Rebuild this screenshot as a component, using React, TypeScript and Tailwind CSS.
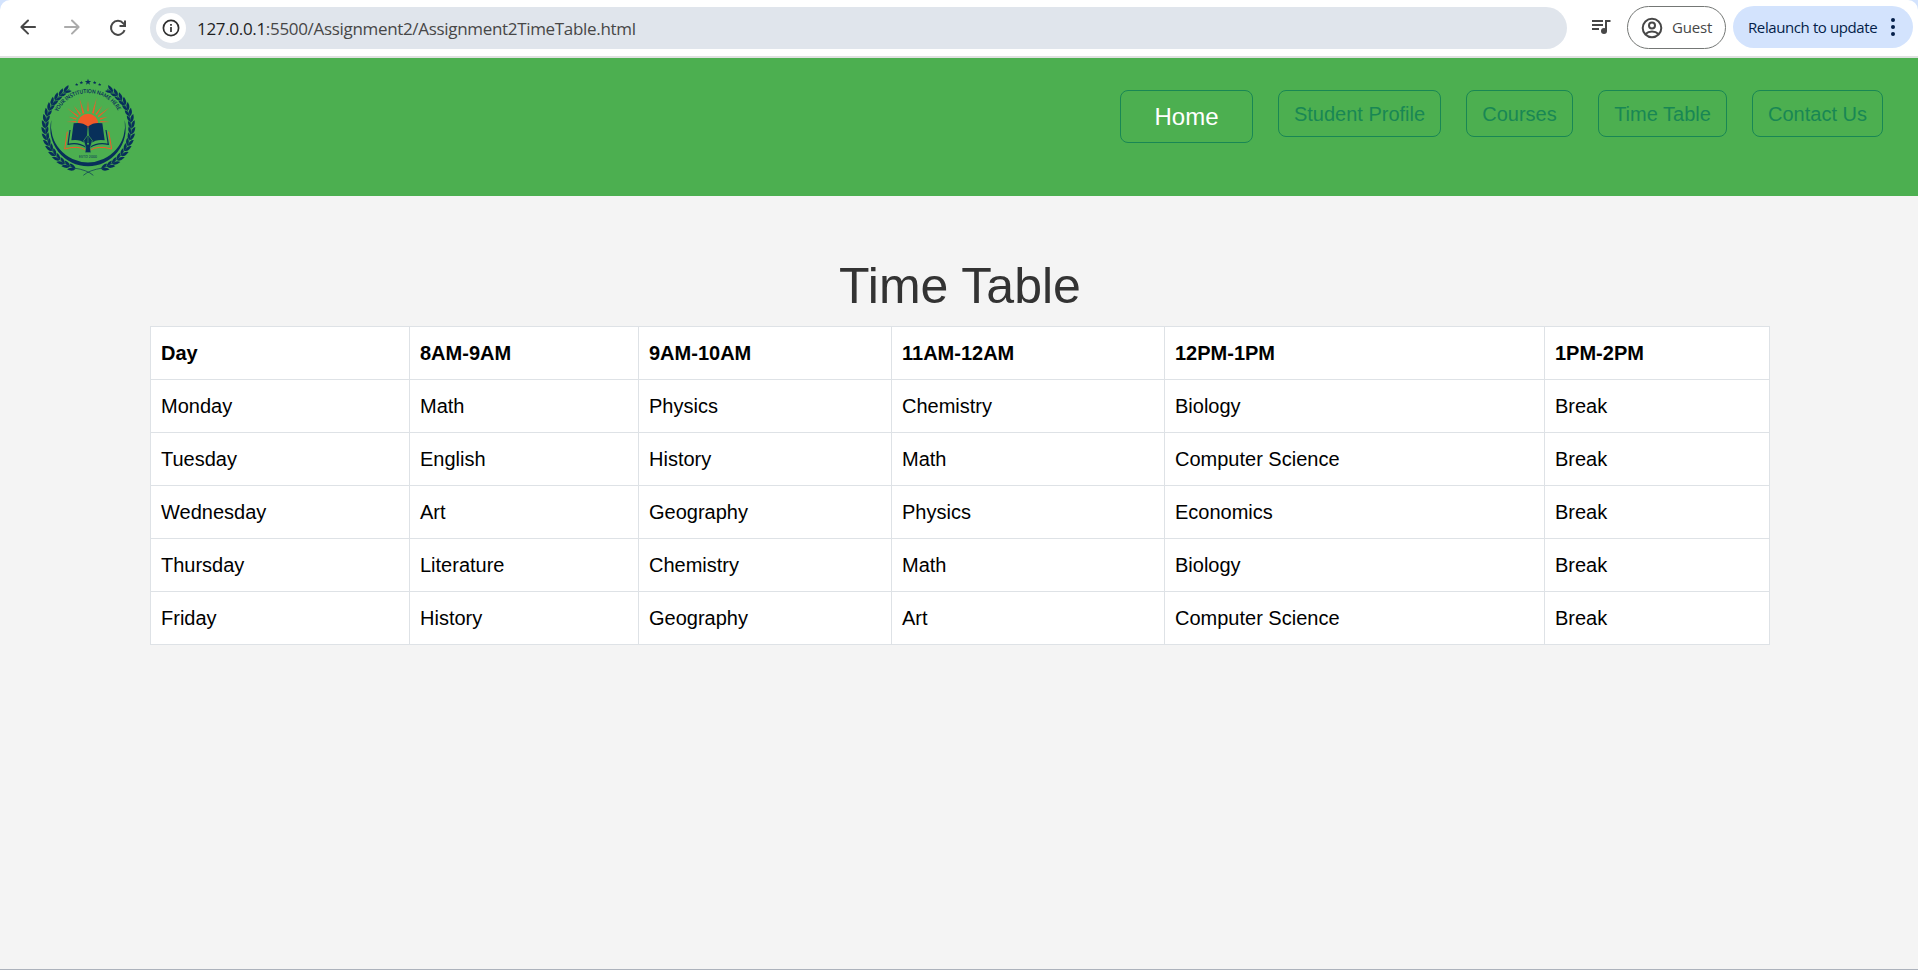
import React from "react";

const navItems = [
  { label: "Student Profile", width: "w-[163px]" },
  { label: "Courses", width: "w-[107px]" },
  { label: "Time Table", width: "w-[129px]" },
  { label: "Contact Us", width: "w-[131px]" },
];

const columns = [
  { label: "Day", width: "w-[259px]" },
  { label: "8AM-9AM", width: "w-[229px]" },
  { label: "9AM-10AM", width: "w-[253px]" },
  { label: "11AM-12AM", width: "w-[273px]" },
  { label: "12PM-1PM", width: "w-[380px]" },
  { label: "1PM-2PM", width: "w-[225px]" },
];

const rows = [
  ["Monday", "Math", "Physics", "Chemistry", "Biology", "Break"],
  ["Tuesday", "English", "History", "Math", "Computer Science", "Break"],
  ["Wednesday", "Art", "Geography", "Physics", "Economics", "Break"],
  ["Thursday", "Literature", "Chemistry", "Math", "Biology", "Break"],
  ["Friday", "History", "Geography", "Art", "Computer Science", "Break"],
];

const leafAngles = [32, 40, 48, 56, 64, 72, 80, 88, 96, 104, 112, 120, 128, 136, 144, 152, 160];

function Wreath() {
  return (
    <g>
      <path d="M119 57 A129 129 0 0 0 132 294 Q172 300 190 316" fill="none" stroke="#08305a" strokeWidth="2" />
      {leafAngles.map((a) => (
        <g key={a} transform={`rotate(${-a} 175 173)`} fill="#08305a">
          <path d="M169 44 Q172 32 192 33 Q188 45 169 44Z" />
          <path d="M169 44 Q176 56 191 53 Q186 43 169 44Z" />
        </g>
      ))}
    </g>
  );
}

function Logo() {
  const star = "M0 -9 L2.4 -3 L9 -2.8 L3.8 1.2 L5.6 7.5 L0 3.8 L-5.6 7.5 L-3.8 1.2 L-9 -2.8 L-2.4 -3Z";
  return (
    <svg width="120" height="115" viewBox="0 0 360 345" aria-label="Institution crest">
      <Wreath />
      <g transform="translate(350 0) scale(-1 1)">
        <Wreath />
      </g>
      <g fill="#08305a">
        <path d={star} transform="translate(174 36) scale(1.05)" />
        <path d={star} transform="translate(154 38) scale(.6)" />
        <path d={star} transform="translate(194 38) scale(.6)" />
        <path d={star} transform="translate(140 44) scale(.55)" />
        <path d={star} transform="translate(209 44) scale(.55)" />
        <path d="M64 150 A113 113 0 1 0 284 150 A111.200 111 0 1 1 64 150Z" />
      </g>
      <path id="crest-arc" d="M83 126 A102 102 0 0 1 266 126" fill="none" />
      <text fill="#08305a" fontFamily="Lato, sans-serif" fontWeight="700" fontSize="16.5">
        <textPath href="#crest-arc" textLength="222" lengthAdjust="spacingAndGlyphs">YOUR INSTITUTION NAME HERE</textPath>
      </text>
      <g fill="#f15a29">
        <path d="M143 162 A31 31 0 0 1 205 162 L174 175Z" />
        <path d="M171.500 124 L174 90 L176.500 124Z" />
        <path d="M158 131 L148 83 L163 129Z" />
        <path d="M186 129 L200 83 L191 131Z" />
        <path d="M149 135 L131 107 L153 132Z" />
        <path d="M196 132 L217 107 L200 135Z" />
        <path d="M143 142 L111 114 L146 138Z" />
        <path d="M203 138 L239 112 L206 142Z" />
        <path d="M138 149 L116 140 L140 145Z" />
        <path d="M209 145 L233 140 L211 149Z" />
        <path d="M138 157 L109 156 L138 153Z" />
        <path d="M211 153 L240 156 L211 157Z" />
      </g>
      <g fill="none" stroke="#f15a29" strokeWidth="3">
        <path d="M112 185 L104 237 Q145 225 168 241" />
        <path d="M236 185 L245 237 Q203 225 180 241" />
      </g>
      <g fill="none" stroke="#08305a" strokeWidth="3.500">
        <path d="M120 180 L114 223 Q145 216 168 232" />
        <path d="M228 180 L235 223 Q203 216 180 232" />
      </g>
      <g fill="#08305a">
        <path d="M131 160 Q156 155 173 169 L171 207 L166 220 Q147 206 124 211Z" />
        <path d="M217 160 Q192 155 175 169 L177 207 L182 220 Q201 206 224 211Z" />
        <path d="M174 194 L187 212 L181 233 L183 248 H165 L167 233 L161 212Z" stroke="#4caf50" strokeWidth="2" />
      </g>
      <path d="M174 199 V218" stroke="#4caf50" strokeWidth="1.500" />
      <circle cx="174" cy="221" r="3" fill="#4caf50" />
      <text x="147" y="264" fill="#08305a" fontFamily="Lato, sans-serif" fontSize="10" textLength="54">
        ESTD 2000
      </text>
    </svg>
  );
}

function BrowserBar() {
  return (
    <div className="bg-[#d3e3fd]">
      <div className="flex h-[58px] items-start rounded-t-[10px] border-b-2 border-[#dfe1e0] bg-white pt-[7px] font-['Open_Sans','Noto_Sans',sans-serif]">
        <div className="flex h-[42px] w-[150px] shrink-0 items-center pl-[16px]">
          <svg width="24" height="24" viewBox="0 -960 960 960" fill="#474747" className="mb-[2px]">
            <path d="m313-440 196 196q12 12 11.500 28T508-188q-12 11-28 11.500T452-188L188-452q-6-6-8.500-13t-2.500-15q0-8 2.500-15t8.500-13l264-264q11-11 27.500-11t28.500 11q12 12 12 28.500T508-715L313-520h447q17 0 28.500 11.500T800-480q0 17-11.500 28.500T760-440H313Z" />
          </svg>
          <svg width="24" height="24" viewBox="0 -960 960 960" fill="#ababab" className="mb-[2px] ml-[20px] -scale-x-100">
            <path d="m313-440 196 196q12 12 11.500 28T508-188q-12 11-28 11.500T452-188L188-452q-6-6-8.500-13t-2.500-15q0-8 2.500-15t8.500-13l264-264q11-11 27.500-11t28.500 11q12 12 12 28.500T508-715L313-520h447q17 0 28.500 11.500T800-480q0 17-11.500 28.500T760-440H313Z" />
          </svg>
          <svg width="24" height="24" viewBox="0 0 24 24" fill="none" stroke="#474747" strokeWidth="2" className="mb-[1px] ml-[22px]">
            <path d="M18.600 14.200A7 7 0 1 1 17.300 7.300L19 9" />
            <path d="M19 4.500V10H13.500" />
          </svg>
        </div>
        <div className="flex h-[42px] w-[1417px] shrink-0 items-center rounded-full bg-[#e0e5ec] pl-[6px]">
          <div className="flex size-[30px] items-center justify-center rounded-full bg-white">
            <svg width="18" height="18" viewBox="0 0 18 18" fill="none" stroke="#303030" strokeWidth="1.700">
              <circle cx="9" cy="9" r="7.600" />
              <path d="M9 8V13M9 5V6.700" />
            </svg>
          </div>
          <div className="ml-[11px] mt-[2px] whitespace-nowrap text-[17px] tracking-[-0.32px] text-[#474747]">
            <span className="text-[#1f1f1f]">127.0.0.1</span>:5500/Assignment2/Assignment2TimeTable.html
          </div>
        </div>
        <svg width="24" height="24" viewBox="0 0 24 24" fill="none" stroke="#474747" strokeWidth="2" className="ml-[22px] mt-[7px] shrink-0">
          <path d="M3 7H14M3 11H14M3 15H10M17 17V7H21.500" />
          <circle cx="15" cy="17" r="3" fill="#474747" stroke="none" />
        </svg>
        <div className="-mt-px ml-[14px] flex h-[43px] w-[99px] shrink-0 items-center rounded-full border border-[#747775] pl-[13px] text-[15px] tracking-[-0.2px] text-[#474747]">
          <svg width="22" height="22" viewBox="0 0 22 22" fill="none" stroke="#474747" strokeWidth="2">
            <circle cx="11" cy="11" r="9.300" />
            <circle cx="11" cy="8.500" r="3" />
            <path d="M4.500 17C8 13.500 14 13.500 17.500 17" />
          </svg>
          <span className="ml-[9px]">Guest</span>
        </div>
        <div className="-mt-px ml-[7px] flex h-[42px] w-[180px] shrink-0 items-center justify-between rounded-full bg-[#d3e3fd] pl-[15px] pr-[18px] text-[15px] tracking-[-0.4px] text-[#041e49]">
          <span className="whitespace-nowrap">Relaunch to update</span>
          <svg width="4" height="18" viewBox="0 0 4 18" fill="#041e49">
            <circle cx="2" cy="2" r="2" />
            <circle cx="2" cy="9" r="2" />
            <circle cx="2" cy="16" r="2" />
          </svg>
        </div>
      </div>
    </div>
  );
}

export default function App() {
  return (
    <div className="flex h-[970px] w-[1918px] flex-col overflow-hidden border-b border-[#acb2bc] bg-[#f4f4f4] font-['Liberation_Sans',Arial,sans-serif]">
      <BrowserBar />
      <header className="flex h-[138px] shrink-0 items-start justify-between bg-[#4caf50] pl-[30px] pr-[35px] pt-[12px]">
        <Logo />
        <nav className="flex items-start gap-[25px] pt-5 text-xl text-[#198754]">
          <a className="flex h-[53px] w-[133px] items-center justify-center rounded-[8px] border border-[#198754] text-2xl text-white">
            Home
          </a>
          {navItems.map((item) => (
            <a
              key={item.label}
              className={`flex h-[47px] items-center justify-center whitespace-nowrap rounded-[8px] border border-[#198754] ${item.width}`}
            >
              {item.label}
            </a>
          ))}
        </nav>
      </header>
      <main className="px-[150px] pt-[60px]">
        <h1 className="mb-[10px] pl-[2px] text-center text-[50px] leading-[60px] text-[#333]">Time Table</h1>
        <table className="w-[1620px] table-fixed border-collapse bg-white text-left text-xl leading-[30px] text-black">
          <thead>
            <tr className="h-[53px]">
              {columns.map((c) => (
                <th key={c.label} className={`border border-[#dee2e6] px-[10px] py-[11px] font-bold ${c.width}`}>
                  {c.label}
                </th>
              ))}
            </tr>
          </thead>
          <tbody>
            {rows.map((r) => (
              <tr key={r[0]} className="h-[53px]">
                {r.map((cell, i) => (
                  <td key={i} className="border border-[#dee2e6] px-[10px] py-[11px]">
                    {cell}
                  </td>
                ))}
              </tr>
            ))}
          </tbody>
        </table>
      </main>
    </div>
  );
}
